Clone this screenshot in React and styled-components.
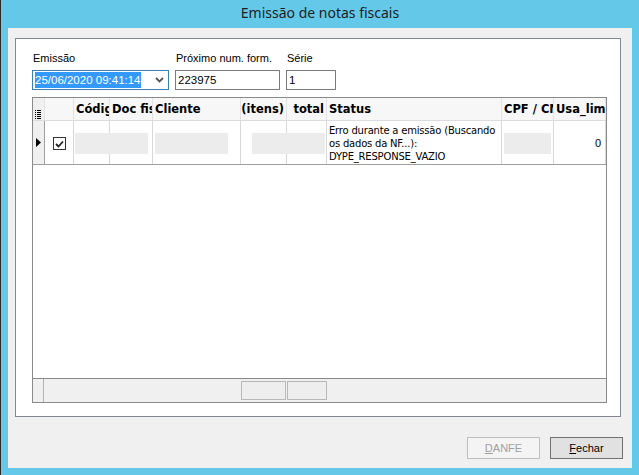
import styled, { createGlobalStyle } from 'styled-components';

const GlobalStyle = createGlobalStyle`
	* {
		box-sizing: border-box;
	}
	body {
		margin: 0;
		background-color: #64c8e8;
		font-family: 'Liberation Sans', Arial, sans-serif;
		font-size: 11px;
		color: #000000;
	}
`;

const Window = styled.div`
	width: 639px;
	height: 475px;
	display: flex;
	flex-direction: column;
	background-color: #64c8e8;
	border-left: 1px solid #2b2b2b;
`;

const TitleBar = styled.div`
	height: 28px;
	display: flex;
	align-items: center;
	justify-content: center;
	padding-bottom: 3px;
	font-family: 'Noto Sans', sans-serif;
	font-size: 14px;
	color: #1e1e1e;
`;

const Client = styled.div`
	flex: 1;
	margin: 0 7px 7px 7px;
	background-color: #f0f0f0;
	display: flex;
	flex-direction: column;
	padding: 10px 9px 9px 7px;
`;

const Panel = styled.div`
	height: 379px;
	width: 606px;
	background-color: #ffffff;
	border: 1px solid #828790;
	padding: 12px 13px 13px 16px;
	display: flex;
	flex-direction: column;
`;

const FieldRow = styled.div`
	display: flex;
	gap: 6px;
	margin-bottom: 7px;
`;

const Field = styled.div`
	display: flex;
	flex-direction: column;
	gap: 5px;
`;

const Label = styled.label`
	height: 14px;
	line-height: 14px;
	padding-left: 1px;
`;

const Input = styled.div`
	width: ${p => p.$width}px;
	height: 20px;
	border: 1px solid ${p => (p.$focused ? '#3c7fb1' : '#7a7a7a')};
	background-color: #ffffff;
	display: flex;
	align-items: center;
	padding: 0 2px;
	font-size: 11.5px;
`;

const Selected = styled.span`
	background-color: #3399ff;
	color: #ffffff;
	height: 16px;
	line-height: 16px;
`;

const Chevron = styled.svg`
	margin-left: auto;
	margin-right: 2px;
`;

const Grid = styled.div`
	width: 575px;
	height: 306px;
	border: 1px solid #8a8a8a;
	display: flex;
	flex-direction: column;
`;

const columns = '12px 29px 36px 43px 88px 46px 40px 175px 52px 52px';

const HeaderRow = styled.div`
	display: grid;
	grid-template-columns: ${columns};
	height: 23px;
	background-color: #f7f7f7;
	border-bottom: 1px solid #dcdcdc;
`;

const HeaderCell = styled.div`
	border-right: 1px solid #e3e3e3;
	font-family: 'DejaVu Sans', Verdana, sans-serif;
	font-weight: 700;
	font-size: 11.5px;
	line-height: 23px;
	white-space: nowrap;
	overflow: hidden;
	padding: 0 2px;
	display: flex;
	justify-content: ${p => (p.$right ? 'flex-end' : 'flex-start')};
	background-color: ${p => (p.$gutter ? '#f0f0f0' : 'transparent')};
`;

const DataRow = styled.div`
	display: grid;
	grid-template-columns: ${columns};
	height: 44px;
	border-bottom: 1px solid #a0a0a0;
`;

const Cell = styled.div`
	border-right: 1px solid ${p => (p.$gutter ? '#a0a0a0' : '#d8d8d8')};
	background-color: ${p => (p.$gutter ? '#f0f0f0' : 'transparent')};
	display: flex;
	align-items: center;
	justify-content: ${p => (p.$align === 'right' ? 'flex-end' : p.$align === 'center' ? 'center' : 'flex-start')};
	padding: 0 2px;
	position: relative;
`;

const Blank = styled.div`
	position: relative;
	z-index: 1;
	flex-shrink: 0;
	width: ${p => p.$width}px;
	height: 21px;
	margin-left: ${p => p.$offset}px;
	margin-top: 1px;
	background-color: #ececec;
`;

const StatusText = styled.div`
	font-family: 'DejaVu Sans', Verdana, sans-serif;
	font-size: 10px;
	line-height: 13px;
	letter-spacing: -0.2px;
	margin-top: 1px;
`;

const Checkbox = styled.div`
	width: 13px;
	height: 13px;
	border: 1px solid #333333;
	background-color: #ffffff;
	display: flex;
	align-items: center;
	justify-content: center;
	margin-left: 6px;
	margin-top: 2px;
`;

const Body = styled.div`
	flex: 1;
`;

const Footer = styled.div`
	height: 24px;
	border-top: 1px solid #8a8a8a;
	background-color: #f0f0f0;
	display: grid;
	grid-template-columns: 11px 197px 46px 40px 1fr;
`;

const FooterGutter = styled.div`
	border-right: 1px solid #b4b4b4;
`;

const Total = styled.div`
	margin: 2px ${p => p.$gap}px 2px 0;
	border: 1px solid #b8b8b8;
	background-color: #eeeeee;
`;

const Actions = styled.div`
	display: flex;
	justify-content: flex-end;
	gap: 10px;
	margin-top: 20px;
`;

const Button = styled.button`
	width: 73px;
	height: 22px;
	font-family: 'Liberation Sans', Arial, sans-serif;
	font-size: 11px;
	border: 1px solid ${p => (p.disabled ? '#bfbfbf' : '#707070')};
	background-color: ${p => (p.disabled ? '#f4f4f4' : '#e1e1e1')};
	color: ${p => (p.disabled ? '#a0a0a0' : '#000000')};
	padding: 0;
	u {
		text-decoration: underline;
	}
`;

const ListIcon = () => (
	<svg width='6' height='9' viewBox='0 0 6 9'>
		{[0, 2, 4, 6, 8].map(y => (
			<g key={y}>
				<rect x='0' y={y} width='1' height='1' fill='#000' />
				<rect x='2' y={y} width='4' height='1' fill='#000' />
			</g>
		))}
	</svg>
);

const App = () => (
	<>
		<GlobalStyle />
		<Window>
			<TitleBar>Emissão de notas fiscais</TitleBar>
			<Client>
				<Panel>
					<FieldRow>
						<Field>
							<Label>Emissão</Label>
							<Input $width={137} $focused>
								<Selected>25/06/2020 09:41:14</Selected>
								<Chevron width='9' height='6' viewBox='0 0 9 6'>
									<path d='M1 1 L4.5 4.5 L8 1' stroke='#555' strokeWidth='1.8' fill='none' />
								</Chevron>
							</Input>
						</Field>
						<Field>
							<Label>Próximo num. form.</Label>
							<Input $width={105}>223975</Input>
						</Field>
						<Field>
							<Label>Série</Label>
							<Input $width={50}>1</Input>
						</Field>
					</FieldRow>
					<Grid>
						<HeaderRow>
							<HeaderCell $gutter>
								<div style={{ paddingTop: 6 }}>
									<ListIcon />
								</div>
							</HeaderCell>
							<HeaderCell />
							<HeaderCell>Código</HeaderCell>
							<HeaderCell>Doc fiscal</HeaderCell>
							<HeaderCell>Cliente</HeaderCell>
							<HeaderCell $right>(itens)</HeaderCell>
							<HeaderCell $right>total</HeaderCell>
							<HeaderCell>Status</HeaderCell>
							<HeaderCell>CPF / CNPJ</HeaderCell>
							<HeaderCell>Usa_limite</HeaderCell>
						</HeaderRow>
						<DataRow>
							<Cell $gutter $align='center'>
								<svg width='5' height='9' viewBox='0 0 5 9'>
									<path d='M0 0 L5 4.5 L0 9 Z' fill='#000' />
								</svg>
							</Cell>
							<Cell>
								<Checkbox>
									<svg width='9' height='8' viewBox='0 0 9 8'>
										<path d='M1 4 L3.5 6.5 L8 1.5' stroke='#222' strokeWidth='1.8' fill='none' />
									</svg>
								</Checkbox>
							</Cell>
							<Cell>
								<Blank $width={73} $offset={-1} />
							</Cell>
							<Cell />
							<Cell>
								<Blank $width={73} $offset={0} />
							</Cell>
							<Cell>
								<Blank $width={73} $offset={9} />
							</Cell>
							<Cell />
							<Cell>
								<StatusText>
									Erro durante a emissão (Buscando
									<br />
									os dados da NF...):
									<br />
									DYPE_RESPONSE_VAZIO
								</StatusText>
							</Cell>
							<Cell>
								<Blank $width={47} $offset={0} />
							</Cell>
							<Cell $align='right'>
								<span style={{ marginRight: 2 }}>0</span>
							</Cell>
						</DataRow>
						<Body />
						<Footer>
							<FooterGutter />
							<div />
							<Total $gap={1} />
							<Total $gap={0} />
							<div />
						</Footer>
					</Grid>
				</Panel>
				<Actions>
					<Button disabled>
						<u>D</u>ANFE
					</Button>
					<Button>
						<u>F</u>echar
					</Button>
				</Actions>
			</Client>
		</Window>
	</>
);

export default App;
